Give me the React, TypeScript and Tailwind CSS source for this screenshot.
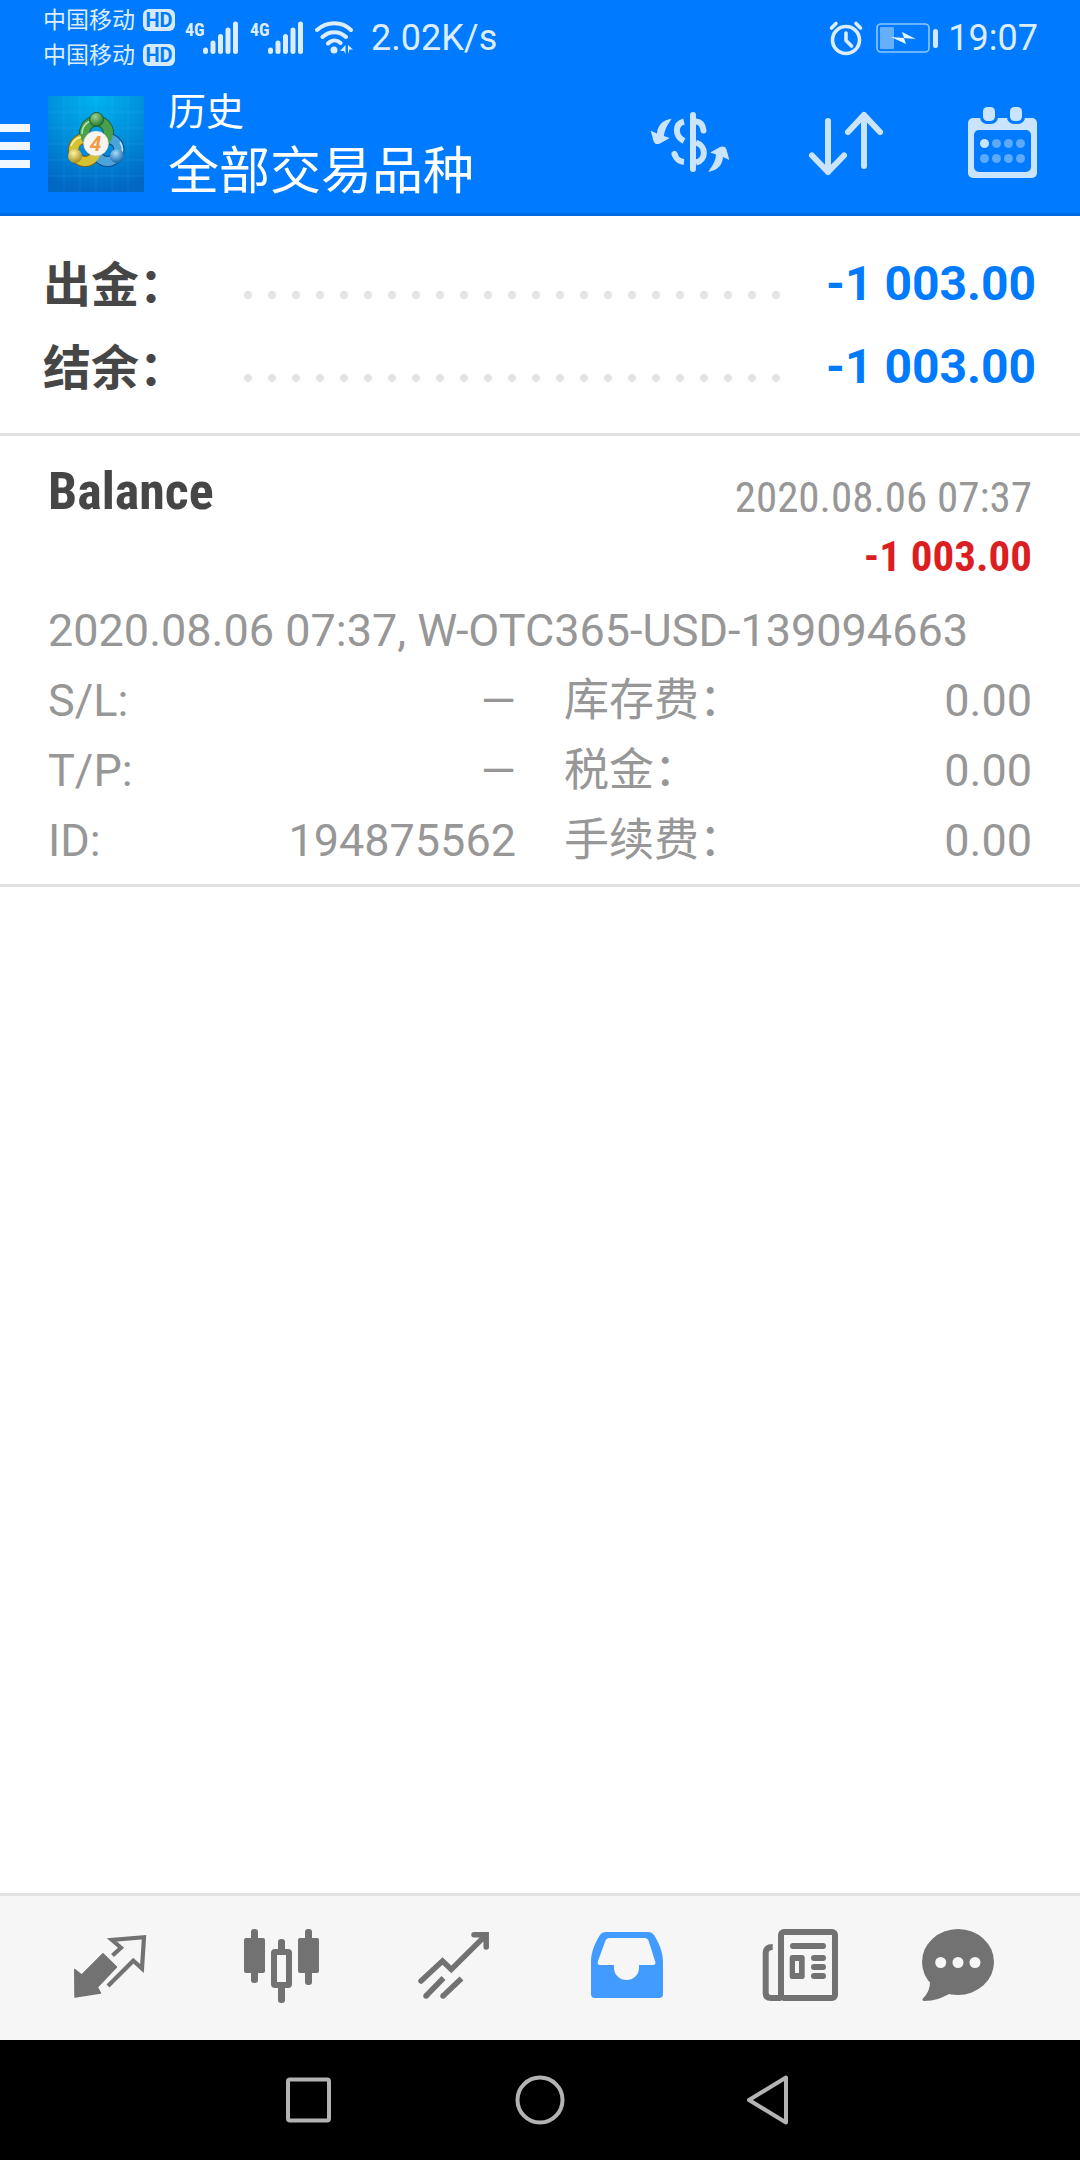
import type { ReactNode } from 'react';

const summary = [
  { label: '出金：', value: '-1 003.00' },
  { label: '结余：', value: '-1 003.00' },
];

const details = [
  { label: 'S/L:', value: '—', feeLabel: '库存费：', fee: '0.00' },
  { label: 'T/P:', value: '—', feeLabel: '税金：', fee: '0.00' },
  { label: 'ID:', value: '194875562', feeLabel: '手续费：', fee: '0.00' },
];

/* Status bar */

function Carrier() {
  return (
    <div className="flex items-center gap-2 h-[35px] text-[23px] leading-none">
      <span>中国移动</span>
      <span className="flex items-center justify-center w-8 h-[22px] rounded-md bg-[#d6eaff] text-[#007aff] text-xl font-bold leading-none">
        HD
      </span>
    </div>
  );
}

function Signal() {
  return (
    <div className="flex h-[34px]">
      <span className="w-[18px] font-['Roboto_Condensed','Liberation_Sans_Narrow','Roboto',sans-serif] text-lg leading-none font-bold">4G</span>
      <svg className="w-[35px] h-[34px]" viewBox="0 0 35 34" stroke="currentColor" strokeWidth="5" strokeLinecap="round">
        <path d="M2.5 29v1.500M10 22v8.5M17.5 15.500v15M25 9v21.500M32.500 3v27.500" />
      </svg>
    </div>
  );
}

function WifiIcon() {
  return (
    <svg className="w-10 h-[34px]" viewBox="0 0 40 34" fill="none" stroke="currentColor" strokeWidth="4" strokeLinecap="round">
      <path d="M2 9C12 0 27 0 36 9M7.500 16C14.500 9.500 24 9.500 31 16M13 22.500C17 18.500 22 18.500 25.500 22" />
      <circle cx="19" cy="29" r="3.500" fill="currentColor" stroke="none" />
      <path d="M30.500 24v9l-1.500-3h-4zM33 24v9l1.500-4.500h3.500z" fill="currentColor" stroke="none" />
    </svg>
  );
}

function AlarmIcon() {
  return (
    <svg className="w-9 h-9" viewBox="0 0 36 36" fill="none" stroke="currentColor" strokeWidth="3.600" strokeLinecap="round" strokeLinejoin="round">
      <circle cx="18" cy="20" r="13.500" />
      <path d="M18 13v7.500l5.500 5.500M3.500 8l4.500-4.500M32.500 8L28 3.500" />
    </svg>
  );
}

function BatteryIcon() {
  return (
    <svg className="w-[62px] h-[30px]" viewBox="0 0 62 30" fill="none">
      <rect x="1" y="1" width="52" height="28" rx="4" stroke="#8fc8ff" strokeWidth="1.600" />
      <rect x="4" y="4" width="14" height="22" rx="1" fill="#66afff" />
      <path d="M15 14l13 1-2-6 14 7-12-1 2 6z" fill="#e8f5ff" />
      <rect x="57" y="6" width="5" height="19" rx="2.500" fill="#d6eaff" />
    </svg>
  );
}

function StatusBar() {
  return (
    <div className="flex items-center h-[75px] pl-[43px] pr-[42px] text-[#dcedff]">
      <div className="flex flex-col">
        <Carrier />
        <Carrier />
      </div>
      <div className="flex gap-3 ml-2.5">
        <Signal />
        <Signal />
        <WifiIcon />
      </div>
      <span className="ml-4 text-4xl leading-none">2.02K/s</span>
      <div className="flex items-center ml-auto">
        <AlarmIcon />
        <span className="ml-3">
          <BatteryIcon />
        </span>
        <span className="ml-2.5 text-4xl leading-none">19:07</span>
      </div>
    </div>
  );
}

/* Header */

function AppLogo() {
  return (
    <svg className="w-24 h-24 shrink-0" viewBox="0 0 96 96">
      <defs>
        <radialGradient id="logoBg" cx="50%" cy="0%" r="100%">
          <stop offset="0" stopColor="#00b4f0" />
          <stop offset="0.500" stopColor="#0090dc" />
          <stop offset="1" stopColor="#0067c2" />
        </radialGradient>
        <radialGradient id="ballGreen" cx="40%" cy="30%" r="70%">
          <stop offset="0" stopColor="#a0d090" />
          <stop offset="1" stopColor="#1f7a2c" />
        </radialGradient>
        <radialGradient id="ballYellow" cx="40%" cy="30%" r="70%">
          <stop offset="0" stopColor="#fff3a0" />
          <stop offset="1" stopColor="#a8901c" />
        </radialGradient>
        <radialGradient id="ballBlue" cx="40%" cy="30%" r="70%">
          <stop offset="0" stopColor="#a6dcf8" />
          <stop offset="1" stopColor="#1567ad" />
        </radialGradient>
      </defs>
      <rect width="96" height="96" fill="url(#logoBg)" />
      <path
        d="M16 0v96M32 0v96M48 0v96M64 0v96M80 0v96M0 16h96M0 32h96M0 48h96M0 64h96M0 80h96"
        stroke="#5fc4f5"
        strokeOpacity="0.120"
      />
      <g fill="none">
        <circle cx="48.500" cy="37" r="12" stroke="#17603a" strokeWidth="11" />
        <circle cx="37" cy="54" r="11.500" stroke="#76691a" strokeWidth="11" />
        <circle cx="59.500" cy="54" r="11.500" stroke="#0d4d84" strokeWidth="11" />
        <circle cx="59.500" cy="54" r="11.500" stroke="#4aa3da" strokeWidth="9" />
        <circle cx="37" cy="54" r="11.500" stroke="#d6c034" strokeWidth="9" />
        <circle cx="48.500" cy="37" r="12" stroke="#48a04c" strokeWidth="9" />
        <path d="M34 38a14.500 14.500 0 0 1 8-13" stroke="#b6e3a4" strokeWidth="1.500" />
        <path d="M23 50a14 14 0 0 1 10-9" stroke="#fff2a0" strokeWidth="1.500" />
        <path d="M72 46a14 14 0 0 1-2 18" stroke="#b7e3fa" strokeWidth="1.500" />
      </g>
      <circle cx="48.500" cy="23.500" r="7" fill="url(#ballGreen)" stroke="#17603a" />
      <circle cx="27" cy="60" r="7" fill="url(#ballYellow)" />
      <circle cx="69" cy="60" r="7" fill="url(#ballBlue)" />
      <circle cx="48" cy="47.500" r="12.500" fill="#f8f5f0" stroke="#b8bcb0" strokeWidth="0.500" />
      <text x="47.500" y="55" textAnchor="middle" fontSize="21" fontWeight="700" fontStyle="italic" fill="#f29a45">
        4
      </text>
    </svg>
  );
}

function CurrencyIcon() {
  const arrow = 'M29.700 22.700C20 24 15.500 30 15 37.500L8.700 34.700L11.500 45Q13 49.500 18 47.500L27.700 42L22 40C22.500 33 26 28 29.700 22.700z';
  return (
    <svg className="w-24 h-24" viewBox="0 0 96 96" fill="none" stroke="currentColor" strokeWidth="6">
      <path d="M51 19v54" strokeLinecap="round" />
      <path d="M42 25.500C32.500 28 32.500 40 42 45M32.500 58C34 63 37 65.500 42 66M54 46.500C64.500 50 64.500 64 54 66.500" />
      <path d="M54 25.500C59 26 61 29 61.500 34.500M32.500 58L33 59" strokeLinecap="round" />
      <path d={arrow} fill="currentColor" stroke="none" />
      <path d={arrow} transform="rotate(180 48 49.300)" fill="currentColor" stroke="none" />
    </svg>
  );
}

function SortIcon() {
  return (
    <svg className="w-24 h-24" viewBox="0 0 96 96" fill="none" stroke="currentColor" strokeWidth="6" strokeLinecap="round" strokeLinejoin="round">
      <path d="M30 25v51M14 59.500L30 76L46 59.500M66 70V19M50 36L66 19L82 36" />
    </svg>
  );
}

function CalendarIcon() {
  return (
    <svg className="w-24 h-24" viewBox="0 0 96 96" fill="currentColor">
      <rect x="14" y="22" width="69" height="60" rx="5" />
      <g fill="#007aff">
        <rect x="20" y="34" width="57" height="42" rx="5" />
        <rect x="26" y="8" width="18" height="20" rx="7" />
        <rect x="53" y="8" width="18" height="20" rx="7" />
      </g>
      <rect x="29" y="11" width="12" height="14" rx="4.500" />
      <rect x="56" y="11" width="12" height="14" rx="4.500" />
      <circle cx="30.500" cy="47.500" r="4.500" />
      <g opacity="0.450">
        <circle cx="42.500" cy="47.500" r="4.500" />
        <circle cx="54.500" cy="47.500" r="4.500" />
        <circle cx="66.500" cy="47.500" r="4.500" />
        <circle cx="30.500" cy="62.500" r="4.500" />
        <circle cx="42.500" cy="62.500" r="4.500" />
        <circle cx="54.500" cy="62.500" r="4.500" />
        <circle cx="66.500" cy="62.500" r="4.500" />
      </g>
    </svg>
  );
}

function Header() {
  return (
    <header className="bg-[#007aff] border-b-[3px] border-[#006adf]">
      <StatusBar />
      <div className="flex items-center h-[138px] pr-[30px]">
        <button aria-label="菜单" className="flex flex-col gap-2.5 w-[30px] mt-1 mr-[18px]">
          <span className="w-full h-2 bg-[#f0f7ff]" />
          <span className="w-full h-2 bg-[#f0f7ff]" />
          <span className="w-full h-2 bg-[#f0f7ff]" />
        </button>
        <AppLogo />
        <div className="ml-6 text-white">
          <div className="text-[38px] leading-[56px]">历史</div>
          <h1 className="text-[51px] leading-[64px]">全部交易品种</h1>
        </div>
        <div className="flex gap-[60px] ml-auto text-[#cbe4fd]">
          <button aria-label="货币">
            <CurrencyIcon />
          </button>
          <button aria-label="排序">
            <SortIcon />
          </button>
          <button aria-label="日期">
            <CalendarIcon />
          </button>
        </div>
      </div>
    </header>
  );
}

/* History */

function Summary() {
  return (
    <section className="pt-[26px] pb-[25px] pl-[43px] pr-11 border-b-[3px] border-[#e2e2e2]">
      {summary.map((row) => (
        <div key={row.label} className="flex items-center h-[83px] text-5xl font-bold">
          <span className="w-[193px] pt-1 text-[#464646]">{row.label}</span>
          {/* dotted leader */}
          <span className="flex-1 h-6 mt-[22px] mr-9 bg-[radial-gradient(circle,#e4e4e4_3.5px,transparent_4.5px)] bg-[length:24px_24px]" />
          <span className="text-[#007aff]">{row.value}</span>
        </div>
      ))}
    </section>
  );
}

function Deal() {
  return (
    <article className="px-12 pt-6 pb-2 border-b-[3px] border-[#e2e2e2] text-[#979797] text-[45px]">
      <div className="flex justify-between font-['Roboto_Condensed','Liberation_Sans_Narrow','Roboto',sans-serif]">
        <h2 className="text-[52px] leading-[64px] font-bold text-[#464646]">Balance</h2>
        <div className="text-right text-[43px] leading-[59px]">
          <div className="pt-2">2020.08.06 07:37</div>
          <div className="font-bold text-[#dc1e23]">-1 003.00</div>
        </div>
      </div>
      <p className="mt-2.5 leading-[70px]">2020.08.06 07:37, W-OTC365-USD-139094663</p>
      {details.map((row) => (
        <div key={row.label} className="grid grid-cols-2 gap-12 leading-[70px]">
          <div className="flex justify-between">
            <span>{row.label}</span>
            <span>{row.value}</span>
          </div>
          <div className="flex justify-between">
            <span>{row.feeLabel}</span>
            <span>{row.fee}</span>
          </div>
        </div>
      ))}
    </article>
  );
}

/* Bottom tabs */

function Tab({ label, active, children }: { label: string; active?: boolean; children: ReactNode }) {
  return (
    <button aria-label={label} className={`flex flex-1 items-center justify-center ${active ? 'text-[#429bff]' : 'text-[#727272]'}`}>
      <svg className="w-24 h-24" viewBox="0 0 96 96" fill="currentColor">
        {children}
      </svg>
    </button>
  );
}

function TabBar() {
  return (
    <nav className="flex h-[147px] px-6 bg-[#f6f6f6] border-t-[3px] border-[#e2e2e2]">
      <Tab label="行情">
        <path d="M12.800 49.500L19.700 55L41 33.800L54.500 47L35.300 67.300L38.500 73L13 77z" stroke="currentColor" strokeWidth="1.500" strokeLinejoin="round" />
        <path d="M50.500 35.500L59 27.700L50 20L82 17.200L80 48.500L71.300 40.700L46 66" fill="none" stroke="currentColor" strokeWidth="4.200" />
      </Tab>
      <Tab label="图表">
        <rect x="17" y="9" width="7" height="54" rx="3" />
        <rect x="10" y="18" width="21" height="35" rx="2" />
        <rect x="44" y="19" width="7" height="16" rx="3" />
        <rect x="44" y="62" width="7" height="21" rx="3" />
        <rect x="40" y="32" width="15" height="33" rx="1" fill="none" stroke="currentColor" strokeWidth="6" />
        <rect x="71" y="9" width="7" height="56" rx="3" />
        <rect x="64" y="18" width="21" height="35" rx="2" />
      </Tab>
      <Tab label="交易">
        <g fill="none" stroke="currentColor" strokeWidth="5.500">
          <path d="M15 61L36.500 41L45.300 49.500L79 16M68 14.800H80.200V27" strokeLinecap="round" />
          <path d="M20 76L37.500 58M37 76L55.500 58.500" />
          <path d="M20 76h.010M37 76h.010" strokeLinecap="round" />
        </g>
      </Tab>
      <Tab label="历史" active>
        <path
          fillRule="evenodd"
          d="M28 12H70Q74 12 76 15C81 23 85 32 85 42V74Q85 78 81 78H17Q13 78 13 74V42C13 32 17 23 22 15Q24 12 28 12zM31 18Q28.500 18 27.500 20.500L20 41Q18.800 45 22 45H36V48A12.500 12 0 0 0 61 48V45H75Q78.500 45 77 41L70.500 20.500Q69.500 18 67 18z"
        />
      </Tab>
      <Tab label="新闻">
        <g fill="none" stroke="currentColor" strokeWidth="6">
          <rect x="31" y="12" width="54" height="66" rx="3" />
          <path d="M22.700 27Q15.700 27 15.700 33V73Q15.700 78 21 78H31" />
          <path d="M43 26H73M64 38H73M64 47H73M64 56H73" strokeLinecap="round" />
        </g>
        <path fillRule="evenodd" d="M42 35H52.500Q54.700 35 54.700 37.500V56.500Q54.700 59 52.500 59H42Q39.700 59 39.700 56.500V37.500Q39.700 35 42 35zM45 41V53H49V41z" />
      </Tab>
      <Tab label="消息">
        <ellipse cx="36" cy="42" rx="36" ry="33" />
        <path d="M8 61Q8.500 71 .500 79Q0 81 2 81C12 81 20 78 29 73z" />
        <g fill="#f6f6f6">
          <circle cx="18.700" cy="42.500" r="5.500" />
          <circle cx="36" cy="42.500" r="5.500" />
          <circle cx="53" cy="42.500" r="5.500" />
        </g>
      </Tab>
    </nav>
  );
}

function SystemNav() {
  return (
    <div className="flex items-center justify-center gap-[181px] h-[120px] bg-black text-[#b3b3b3]">
      <button aria-label="最近任务">
        <svg className="w-[50px] h-[50px]" viewBox="0 0 50 50" fill="none" stroke="currentColor" strokeWidth="4">
          <rect x="4" y="4.500" width="41" height="41" rx="2" />
        </svg>
      </button>
      <button aria-label="主屏幕">
        <svg className="w-[50px] h-[50px]" viewBox="0 0 50 50" fill="none" stroke="currentColor" strokeWidth="4">
          <circle cx="25" cy="25" r="22.500" />
        </svg>
      </button>
      <button aria-label="返回">
        <svg className="w-[50px] h-[50px]" viewBox="0 0 50 50" fill="none" stroke="currentColor" strokeWidth="4" strokeLinejoin="round">
          <path d="M40 2.500V47.500L3 25z" />
        </svg>
      </button>
    </div>
  );
}

export default function App() {
  return (
    <div className="flex flex-col min-h-screen bg-white font-['Roboto','Noto_Sans_CJK_SC',sans-serif]">
      <Header />
      <main className="flex-1">
        <Summary />
        <Deal />
      </main>
      <TabBar />
      <SystemNav />
    </div>
  );
}
